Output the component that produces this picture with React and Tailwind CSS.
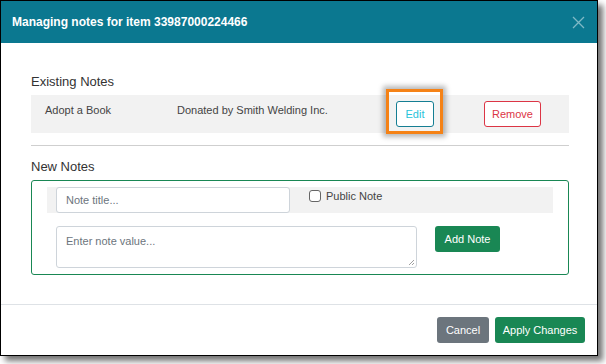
import React from "react";

const App = () => {
  return (
    <div className="w-[606px] h-[364px] bg-white font-['Liberation_Sans',Arial,sans-serif]">
      <div className="w-[598px] h-[356px] border border-black bg-white flex flex-col shadow-[5px_5px_6px_rgba(0,0,0,0.55)]">
        {/* header */}
        <div className="h-[42px] shrink-0 bg-[#0b7890] flex items-center justify-between pl-[11px] pr-[12px]">
          <h1 className="text-white text-[12px] font-bold">Managing notes for item 33987000224466</h1>
          <svg width="13" height="13" viewBox="0 0 13 13" className="mt-[1px]">
            <path d="M1 1 L12 12 M12 1 L1 12" stroke="#7fb9c6" strokeWidth="1.3" />
          </svg>
        </div>

        {/* body */}
        <div className="flex-1 pl-[30px] pr-[28px] pt-[31px]">
          <h2 className="text-[13px] text-[#333] leading-[16px]">Existing Notes</h2>
          <div className="mt-[5px] h-[38px] bg-[#f2f2f2] flex items-start text-[11px] text-[#444]">
            <span className="w-[146px] shrink-0 pl-[14px] pt-[7px]">Adopt a Book</span>
            <span className="w-[202px] shrink-0 pt-[7px]">Donated by Smith Welding Inc.</span>
            <div className="relative mt-[6px] ml-[17px]">
              <div className="absolute -left-[10px] -top-[12px] w-[57px] h-[45px] border-[3px] border-[#f58216] shadow-[0_0_5px_3px_rgba(0,0,0,0.28)]"></div>
              <button className="relative w-[38px] h-[26px] rounded-[3px] border border-[#157e93] bg-white text-[#28c3da] text-[11px]">Edit</button>
            </div>
            <button className="mt-[6px] ml-[50px] w-[57px] h-[26px] rounded-[3px] border border-[#dc3545] bg-white text-[#dc3545] text-[11px]">Remove</button>
          </div>
          <div className="mt-[12px] border-t border-[#cfcfcf]"></div>

          <h2 className="mt-[13px] text-[13px] text-[#333] leading-[16px]">New Notes</h2>
          <div className="mt-[5px] h-[95px] border border-[#198754] rounded-[3px] px-[15px] pt-[6px]">
            <div className="h-[26px] bg-[#f2f2f2] flex items-start pl-[9px]">
              <div className="w-[234px] h-[26px] bg-white border border-[#ced4da] rounded-[3px] flex items-center px-[9px] text-[11px] text-[#6c757d]">Note title...</div>
              <label className="ml-[19px] mt-[1px] flex items-center gap-[5px] text-[11px] text-[#444]">
                <span className="w-[12px] h-[12px] border border-[#666] rounded-[3px] bg-white"></span>
                Public Note
              </label>
            </div>
            <div className="mt-[13px] flex items-start pl-[9px]">
              <div className="relative w-[361px] h-[42px] bg-white border border-[#ced4da] rounded-[3px] px-[9px] pt-[6px] text-[11px] text-[#6c757d]">
                Enter note value...
                <svg width="7" height="7" viewBox="0 0 7 7" className="absolute right-[1px] bottom-[1px]">
                  <path d="M6 1 L1 6 M6 4 L4 6" stroke="#888" strokeWidth="0.8" />
                </svg>
              </div>
              <button className="ml-[18px] w-[65px] h-[26px] rounded-[3px] bg-[#198754] text-white text-[11px]">Add Note</button>
            </div>
          </div>
        </div>

        {/* footer */}
        <div className="h-[51px] shrink-0 border-t border-[#dee2e6] flex items-center justify-end gap-[6px] pr-[12px]">
          <button className="w-[52px] h-[26px] rounded-[3px] bg-[#6c757d] text-white text-[11px]">Cancel</button>
          <button className="w-[90px] h-[26px] rounded-[3px] bg-[#198754] text-white text-[11px]">Apply Changes</button>
        </div>
      </div>
    </div>
  );
};

export default App;
